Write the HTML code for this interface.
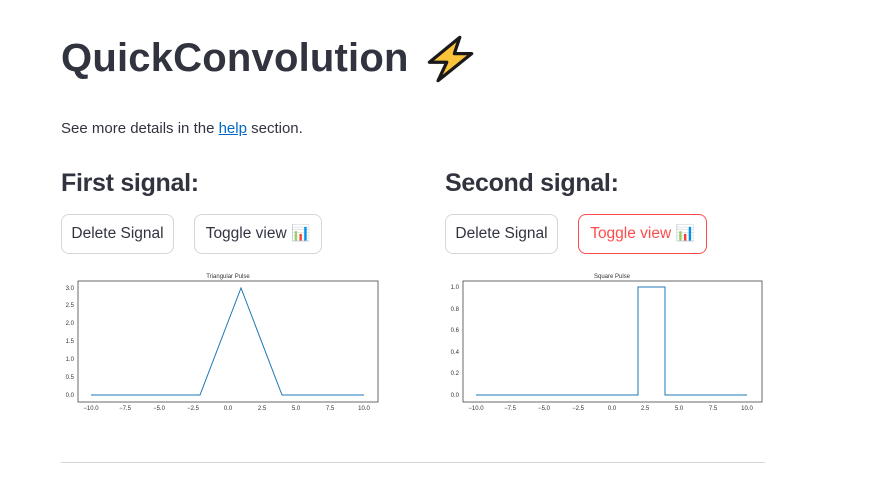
<!DOCTYPE html>
<html><head><meta charset="utf-8"><style>
body{margin:0;width:873px;height:479px;background:#fff;font-family:"Liberation Sans",sans-serif;color:#31333f;position:relative;overflow:hidden}
.a{position:absolute;white-space:nowrap}
h1{position:absolute;left:61px;top:36px;margin:0;font-size:40px;font-weight:700;letter-spacing:0.2px;white-space:nowrap}
h2{position:absolute;margin:0;font-size:25px;font-weight:700;top:169px;letter-spacing:-0.3px}
.btn{position:absolute;top:214px;border:1px solid #d6d6d9;border-radius:8px;font-size:15.5px;line-height:38px;text-align:center;box-sizing:border-box;height:40px;white-space:nowrap}
.red{border-color:#ff4b4b;color:#ff4b4b}
svg text{font-family:"Liberation Sans",sans-serif;font-size:6px;fill:#333}
</style></head><body>
<h1>QuickConvolution</h1>
<svg class="a" style="left:424px;top:33px" width="52" height="52" viewBox="0 0 48 48"><path d="M33 4 L5 27 H21 L13 44 L44 19 H28 Z" fill="#fcc43a" stroke="#1a1a1a" stroke-width="3" stroke-linejoin="round"/></svg>
<div class="a" style="left:61px;top:120px;font-size:15px">See more details in the <span style="color:#0068c9;text-decoration:underline">help</span> section.</div>
<h2 style="left:61px">First signal:</h2>
<h2 style="left:445px">Second signal:</h2>
<div class="btn" style="left:61px;width:113px">Delete Signal</div>
<div class="btn" style="left:194px;width:128px">Toggle view 📊</div>
<div class="btn" style="left:445px;width:113px">Delete Signal</div>
<div class="btn red" style="left:578px;width:129px">Toggle view 📊</div>
<svg class="a" style="left:0;top:0" width="873" height="479">
<text x="228" y="278" text-anchor="middle">Triangular Pulse</text>
<rect x="78" y="281" width="300" height="121" fill="none" stroke="#444" stroke-width="0.8"/>
<polyline points="91,395 200,395 241,288 282,395 364,395" fill="none" stroke="#1f77b4" stroke-width="1"/>
<g text-anchor="end"><text x="74" y="397">0.0</text><text x="74" y="379">0.5</text><text x="74" y="361">1.0</text><text x="74" y="343">1.5</text><text x="74" y="325">2.0</text><text x="74" y="307">2.5</text><text x="74" y="290">3.0</text></g>
<g text-anchor="middle"><text x="91" y="410">−10.0</text><text x="125" y="410">−7.5</text><text x="159" y="410">−5.0</text><text x="193" y="410">−2.5</text><text x="228" y="410">0.0</text><text x="262" y="410">2.5</text><text x="296" y="410">5.0</text><text x="330" y="410">7.5</text><text x="364" y="410">10.0</text></g>
<text x="612" y="278" text-anchor="middle">Square Pulse</text>
<rect x="463" y="281" width="299" height="121" fill="none" stroke="#444" stroke-width="0.8"/>
<polyline points="476,395 638,395 638,287 665,287 665,395 747,395" fill="none" stroke="#1f77b4" stroke-width="1"/>
<g text-anchor="end"><text x="459" y="397">0.0</text><text x="459" y="375">0.2</text><text x="459" y="354">0.4</text><text x="459" y="332">0.6</text><text x="459" y="311">0.8</text><text x="459" y="289">1.0</text></g>
<g text-anchor="middle"><text x="476" y="410">−10.0</text><text x="510" y="410">−7.5</text><text x="544" y="410">−5.0</text><text x="578" y="410">−2.5</text><text x="612" y="410">0.0</text><text x="645" y="410">2.5</text><text x="679" y="410">5.0</text><text x="713" y="410">7.5</text><text x="747" y="410">10.0</text></g>
<line x1="61" y1="462.5" x2="765" y2="462.5" stroke="#d6d6d9"/>
</svg>
</body></html>
